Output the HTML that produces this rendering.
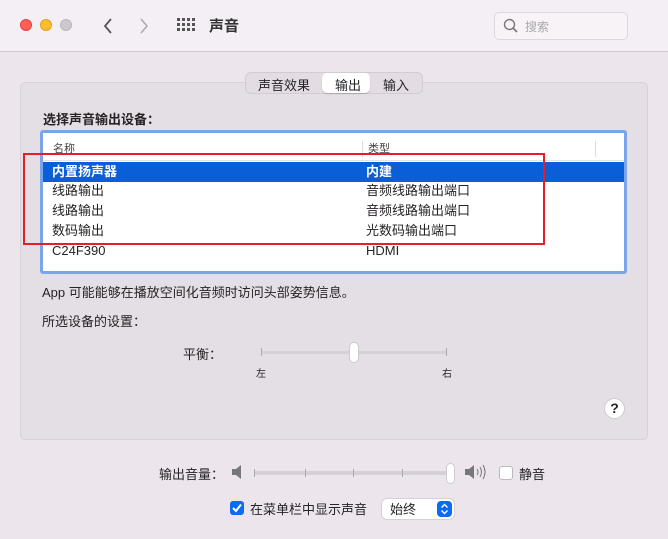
<!DOCTYPE html>
<html><head><meta charset="utf-8"><style>
*{margin:0;padding:0;box-sizing:border-box}
body{width:668px;height:539px;overflow:hidden;background:#ece6ec;font-family:"Liberation Sans","Noto Sans CJK SC",sans-serif;font-size:13px;color:#262326;position:relative}
.abs{position:absolute}
.tb{left:0;top:0;width:668px;height:52px;background:#f4eff4;border-bottom:1px solid #cfc9cf}
.dot{width:12px;height:12px;border-radius:50%;top:19px}
.group{left:20px;top:82px;width:628px;height:358px;background:#e4dfe4;border:1px solid #d8d2d8;border-radius:5px}
.tabs{left:245px;top:72px;width:178px;height:22px;background:#e3dde3;border:1px solid #d2ccd2;border-radius:6px}
.tabs span{position:absolute;top:2px;font-size:13px}
.table{left:40px;top:130px;width:587px;height:144px;background:#fff;border:3px solid #7ba5ea;border-radius:3px}
.row{position:absolute;left:0;width:581px;height:20px;line-height:20px}
.row span{position:absolute}
</style></head><body>
<div class="abs tb"></div>
<div class="abs dot" style="left:20px;background:#fe5f57;border:1px solid #e0443e"></div>
<div class="abs dot" style="left:40px;background:#febc2e;border:1px solid #dea123"></div>
<div class="abs dot" style="left:60px;background:#cdc8cd;border:1px solid #bbb6bb"></div>
<svg class="abs" style="left:100px;top:16px" width="60" height="20"><path d="M11 3 L5 10 L11 17" stroke="#555" stroke-width="1.8" fill="none"/><path d="M41 3 L47 10 L41 17" stroke="#aaa" stroke-width="1.5" fill="none"/></svg>
<svg class="abs" style="left:177px;top:18px" width="18" height="16" fill="#555"><g><rect x="0" y="0" width="3" height="3"/><rect x="5" y="0" width="3" height="3"/><rect x="10" y="0" width="3" height="3"/><rect x="15" y="0" width="3" height="3"/><rect x="0" y="5" width="3" height="3"/><rect x="5" y="5" width="3" height="3"/><rect x="10" y="5" width="3" height="3"/><rect x="15" y="5" width="3" height="3"/><rect x="0" y="10" width="3" height="3"/><rect x="5" y="10" width="3" height="3"/><rect x="10" y="10" width="3" height="3"/><rect x="15" y="10" width="3" height="3"/></g></svg>
<div class="abs" style="left:209px;top:15px;font-size:15px;font-weight:bold;color:#333">声音</div>
<div class="abs" style="left:494px;top:12px;width:134px;height:28px;background:#f7f3f7;border:1px solid #ddd7dd;border-radius:5px"></div>
<svg class="abs" style="left:503px;top:18px" width="16" height="16"><circle cx="6.5" cy="6.5" r="5" stroke="#777" stroke-width="1.4" fill="none"/><path d="M10 10 L14 14" stroke="#777" stroke-width="1.6"/></svg>
<div class="abs" style="left:525px;top:18px;font-size:12px;color:#aaa">搜索</div>
<div class="abs group"></div>
<div class="abs tabs">
<div class="abs" style="left:76px;top:0;width:48px;height:20px;background:#fff;border-radius:5px;box-shadow:0 1px 1px rgba(0,0,0,.2)"></div>
<span style="left:12px">声音效果</span><span style="left:89px">输出</span><span style="left:137px">输入</span></div>
<div class="abs" style="left:43px;top:109px;font-weight:bold;font-size:13px">选择声音输出设备：</div>
<div class="abs table">
<div class="row" style="top:6px;font-size:11px;color:#444"><span style="left:10px">名称</span><span style="left:325px">类型</span></div>
<div class="abs" style="left:319px;top:8px;width:1px;height:16px;background:#ddd"></div>
<div class="abs" style="left:552px;top:8px;width:1px;height:16px;background:#ddd"></div>
<div class="abs" style="left:0;top:27px;width:581px;height:1px;background:#e4e4e4"></div>
<div class="row" style="top:29px;background:#0a5fd8;color:#fff;font-weight:bold"><span style="left:9px">内置扬声器</span><span style="left:323px">内建</span></div>
<div class="row" style="top:48px"><span style="left:9px">线路输出</span><span style="left:323px">音频线路输出端口</span></div>
<div class="row" style="top:68px"><span style="left:9px">线路输出</span><span style="left:323px">音频线路输出端口</span></div>
<div class="row" style="top:88px"><span style="left:9px">数码输出</span><span style="left:323px">光数码输出端口</span></div>
<div class="row" style="top:108px"><span style="left:9px">C24F390</span><span style="left:323px">HDMI</span></div>
</div>
<div class="abs" style="left:23px;top:153px;width:522px;height:92px;border:2px solid #e3202a"></div>
<div class="abs" style="left:42px;top:282px">App 可能能够在播放空间化音频时访问头部姿势信息。</div>
<div class="abs" style="left:42px;top:311px">所选设备的设置：</div>
<div class="abs" style="left:183px;top:344px">平衡：</div>
<div class="abs" style="left:261px;top:351px;width:186px;height:3px;background:#d6d1d6;border-radius:2px"></div>
<div class="abs" style="left:261px;top:348px;width:1px;height:8px;background:#aaa"></div>
<div class="abs" style="left:446px;top:348px;width:1px;height:8px;background:#aaa"></div>
<div class="abs" style="left:349px;top:342px;width:10px;height:21px;background:#fff;border:1px solid #ccc;border-radius:5px"></div>
<div class="abs" style="left:256px;top:365px;font-size:10px">左</div>
<div class="abs" style="left:442px;top:365px;font-size:10px">右</div>
<div class="abs" style="left:604px;top:398px;width:21px;height:21px;border-radius:50%;background:#fff;border:1px solid #ccc;text-align:center;line-height:19px;font-weight:bold;font-size:14px">?</div>
<div class="abs" style="left:159px;top:464px">输出音量：</div>
<svg class="abs" style="left:231px;top:464px" width="14" height="16"><path d="M1 5 H5 L10 1 V15 L5 11 H1Z" fill="#777"/></svg>
<div class="abs" style="left:254px;top:471px;width:196px;height:4px;background:#d6d1d6;border-radius:2px"></div>
<div class="abs" style="left:254px;top:469px;width:1px;height:8px;background:#aaa"></div>
<div class="abs" style="left:305px;top:469px;width:1px;height:8px;background:#aaa"></div>
<div class="abs" style="left:353px;top:469px;width:1px;height:8px;background:#aaa"></div>
<div class="abs" style="left:402px;top:469px;width:1px;height:8px;background:#aaa"></div>
<div class="abs" style="left:446px;top:463px;width:9px;height:21px;background:#fff;border:1px solid #ccc;border-radius:5px"></div>
<svg class="abs" style="left:464px;top:464px" width="24" height="16"><path d="M1 5 H5 L10 1 V15 L5 11 H1Z" fill="#777"/><path d="M13 5 Q15 8 13 11 M16 3 Q19 8 16 13 M19 1 Q23 8 19 15" stroke="#777" fill="none"/></svg>
<div class="abs" style="left:499px;top:466px;width:14px;height:14px;background:#fff;border:1px solid #bbb;border-radius:3px"></div>
<div class="abs" style="left:519px;top:464px">静音</div>
<div class="abs" style="left:230px;top:501px;width:14px;height:14px;background:#0a6cf0;border-radius:3px"></div>
<svg class="abs" style="left:230px;top:501px" width="14" height="14"><path d="M3 7 L6 10 L11 3.5" stroke="#fff" stroke-width="2" fill="none"/></svg>
<div class="abs" style="left:250px;top:499px">在菜单栏中显示声音</div>
<div class="abs" style="left:382px;top:499px;width:72px;height:20px;background:#fff;border-radius:5px;box-shadow:0 0 0 1px #d6d0d6"></div>
<div class="abs" style="left:390px;top:499px">始终</div>
<div class="abs" style="left:437px;top:501px;width:15px;height:16px;background:#0a6cf0;border-radius:4px"></div>
<svg class="abs" style="left:437px;top:501px" width="15" height="16"><path d="M4.5 6.5 L7.5 3.5 L10.5 6.5 M4.5 9.5 L7.5 12.5 L10.5 9.5" stroke="#fff" stroke-width="1.4" fill="none"/></svg>
</body></html>
